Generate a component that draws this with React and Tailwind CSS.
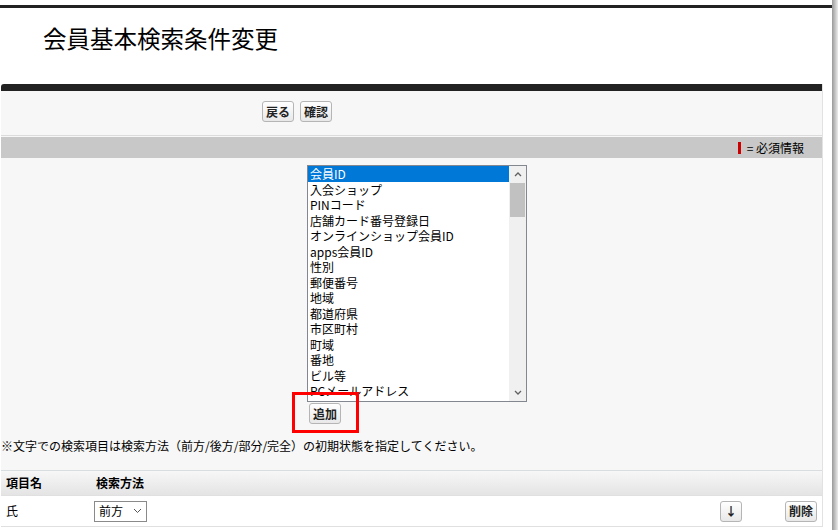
const ITEMS = [
  "会員ID",
  "入会ショップ",
  "PINコード",
  "店舗カード番号登録日",
  "オンラインショップ会員ID",
  "apps会員ID",
  "性別",
  "郵便番号",
  "地域",
  "都道府県",
  "市区町村",
  "町域",
  "番地",
  "ビル等",
  "PCメールアドレス",
];

const FONT = {
  fontFamily: '"Noto Sans CJK JP", "Liberation Sans", sans-serif',
};

function Btn({ children, className = "" }) {
  return (
    <button
      className={
        "h-[21px] px-[3px] rounded-[3px] border border-[#b5b5b5] bg-gradient-to-b from-white to-[#e8e8e8] text-[12px] font-bold leading-none text-[#222] " +
        className
      }
    >
      {children}
    </button>
  );
}

export default function App() {
  return (
    <div className="w-[838px] h-[530px] bg-white overflow-hidden flex" style={FONT}>
      <div className="w-[832px] shrink-0 relative">
        <div className="mt-[5px] border-t-[3px] border-[#222]" />
        {/* title */}
        <div className="h-[76px] pl-[43px] pt-[14px]">
          <h1 className="text-[23.5px] leading-[32px] text-black">会員基本検索条件変更</h1>
        </div>

        {/* panel */}
        <div className="ml-[1px] w-[822px] border-r border-[#e2e2e2] bg-[#f7f7f7]">
          <div className="h-[7px] bg-[#222] rounded-tl-[3px]" />
          <div className="h-[44px] pl-[261px] pt-[10px] flex gap-[6px]">
            <Btn>戻る</Btn>
            <Btn>確認</Btn>
          </div>
          <div className="h-[1px] bg-[#dcdcdc]" />
          <div className="h-[1px]" />
          <div className="h-[21px] bg-[#c8c8c8] flex items-center justify-end pr-[18px] text-[12px] text-black">
            <span className="w-[3px] h-[12px] bg-[#c00] mr-[6px]" />
            <span>= 必須情報</span>
          </div>

          <div className="pt-[7px] pl-[306px] relative">
            <div className="w-[220px] h-[237px] border border-[#828790] bg-white flex">
              <div className="flex-1 overflow-hidden text-[12px] leading-[15.5px] text-black">
                {ITEMS.map((it, i) => (
                  <div
                    key={it}
                    className={
                      "pl-[2px] whitespace-nowrap " +
                      (i === 0 ? "bg-[#0078d7] text-white" : "")
                    }
                  >
                    {it}
                  </div>
                ))}
              </div>
              <div className="w-[17px] bg-[#f0f0f0] flex flex-col items-center">
                <div className="h-[17px] flex items-center justify-center">
                  <svg width="8" height="5" viewBox="0 0 8 5">
                    <path d="M1 4 L4 1 L7 4" fill="none" stroke="#606060" strokeWidth="1.3" />
                  </svg>
                </div>
                <div className="w-[15px] h-[34px] bg-[#c1c1c1]" />
                <div className="flex-1" />
                <div className="h-[17px] flex items-center justify-center">
                  <svg width="8" height="5" viewBox="0 0 8 5">
                    <path d="M1 1 L4 4 L7 1" fill="none" stroke="#606060" strokeWidth="1.3" />
                  </svg>
                </div>
              </div>
            </div>
            <div className="pl-[2px] pt-[1px] flex">
              <Btn>追加</Btn>
            </div>
            <div className="absolute left-[291px] top-[234px] w-[67px] h-[41px] border-[3px] border-[#f00]" />
          </div>

          <div className="pt-[14px] pb-[16px] text-[12px] leading-[16px] text-black whitespace-nowrap">
            ※文字での検索項目は検索方法（前方/後方/部分/完全）の初期状態を指定してください。
          </div>

          <div className="border-t border-[#d8dde0] h-[25px] bg-gradient-to-b from-[#f7f7f7] to-[#e4e4e4] flex items-center text-[12px] font-bold text-black">
            <div className="w-[95px] pl-[5px]">項目名</div>
            <div>検索方法</div>
          </div>
          <div className="border-t border-[#e0e0e0] border-b h-[32px] bg-white flex items-center text-[12px] text-black">
            <div className="w-[93px] pl-[5px]">氏</div>
            <div className="w-[53px] h-[21px] border border-[#8a8a8a] bg-white flex items-center justify-between px-[4px]">
              <span>前方</span>
              <svg width="9" height="6" viewBox="0 0 9 6">
                <path d="M1 1 L4.5 4.5 L8 1" fill="none" stroke="#555" strokeWidth="1" />
              </svg>
            </div>
            <div className="flex-1" />
            <Btn className="w-[22px] px-0 mr-[43px]">↓</Btn>
            <Btn className="mr-[5px]">削除</Btn>
          </div>
        </div>
      </div>
      <div className="w-[6px] h-full bg-gradient-to-r from-[#9a9a9a] to-[#ececec]" />
    </div>
  );
}
